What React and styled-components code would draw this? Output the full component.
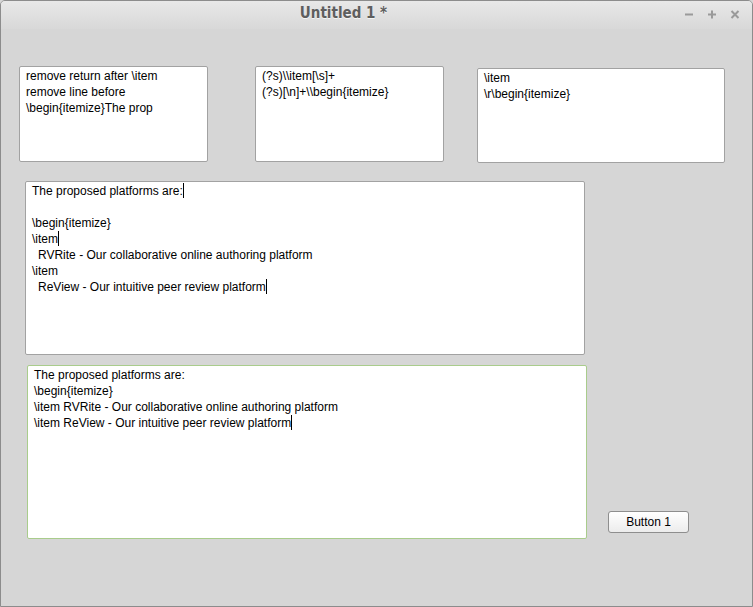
import React from "react";
import styled, { createGlobalStyle } from "styled-components";

const Global = createGlobalStyle`
  html, body {
    margin: 0;
    padding: 0;
    background: #d6d6d6;
  }
  body {
    font-family: "Liberation Sans", Arial, sans-serif;
  }
`;

const Window = styled.div`
  width: 753px;
  height: 607px;
  box-sizing: border-box;
  background: #d6d6d6;
  border: 1px solid #8c8c8c;
  border-radius: 5px 5px 0 0;
  display: flex;
  flex-direction: column;
  overflow: hidden;
`;

const TitleBar = styled.div`
  height: 28px;
  flex-shrink: 0;
  display: flex;
  align-items: center;
  justify-content: center;
  position: relative;
  background: linear-gradient(#e8e8e8, #d8d8d8);
`;

const Title = styled.span`
  font-family: "DejaVu Sans Condensed", "DejaVu Sans", sans-serif;
  font-stretch: condensed;
  font-weight: bold;
  font-size: 15px;
  color: #5e5e5e;
  text-shadow: 0 1px 0 #f4f4f4;
  margin-left: -66px;
  margin-top: -4px;
`;

const Controls = styled.div`
  position: absolute;
  right: 10px;
  top: 6px;
  display: flex;
  gap: 9px;
`;

const Ctl = styled.svg`
  width: 14px;
  height: 14px;
  stroke: #9a9a9a;
  stroke-width: 2;
  fill: none;
`;

const Body = styled.div`
  flex: 1;
  padding: 37px 0 0 17px;
  display: flex;
  flex-direction: column;
  align-items: flex-start;
`;

const TopRow = styled.div`
  display: flex;
  align-items: flex-start;
`;

const Box = styled.div`
  box-sizing: border-box;
  width: ${(p) => p.$w}px;
  height: ${(p) => p.$h}px;
  margin-left: ${(p) => p.$ml || 0}px;
  margin-top: ${(p) => p.$mt || 0}px;
  background: #fff;
  border: 1px solid ${(p) => (p.$focus ? "#a9cc8c" : "#a2a2a2")};
  border-radius: 2px;
  padding: 1px 6px;
  font-size: 12px;
  line-height: 16px;
  color: #000;
  white-space: pre;
  overflow: hidden;
`;

const Line = styled.div`
  height: 16px;
  margin-left: ${(p) => p.$indent || 0}px;
`;

const Caret = styled.span`
  display: inline-block;
  width: 0;
  height: 15px;
  border-left: 1px solid #000;
  vertical-align: -3px;
`;

const BottomRow = styled.div`
  display: flex;
  align-items: flex-end;
  margin-top: 10px;
  margin-left: 9px;
`;

const Button = styled.button`
  box-sizing: border-box;
  width: 81px;
  height: 22px;
  margin: 0 0 6px 21px;
  padding: 0;
  font-family: "Liberation Sans", Arial, sans-serif;
  font-size: 12px;
  color: #000;
  background: linear-gradient(#ffffff, #ececec);
  border: 1px solid #8e8e8e;
  border-radius: 3px;
`;

export default function App() {
  return (
    <>
      <Global />
      <Window>
        <TitleBar>
          <Title>Untitled 1 *</Title>
          <Controls>
            <Ctl viewBox="0 0 14 14">
              <path d="M3 7.5h8" />
            </Ctl>
            <Ctl viewBox="0 0 14 14">
              <path d="M3 7.5h8M7 3.5v8" />
            </Ctl>
            <Ctl viewBox="0 0 14 14">
              <path d="M3.5 4l7 7M10.5 4l-7 7" />
            </Ctl>
          </Controls>
        </TitleBar>
        <Body>
          <TopRow>
            <Box $w={189} $h={96} $ml={1}>
              <Line>remove return after \item</Line>
              <Line>remove line before</Line>
              <Line>\begin{"{"}itemize{"}"}The prop</Line>
            </Box>
            <Box $w={189} $h={96} $ml={47}>
              <Line>(?s)\\item[\s]+</Line>
              <Line>(?s)[\n]+\\begin{"{"}itemize{"}"}</Line>
            </Box>
            <Box $w={248} $h={95} $ml={33} $mt={2}>
              <Line>\item</Line>
              <Line>\r\begin{"{"}itemize{"}"}</Line>
            </Box>
          </TopRow>
          <Box $w={560} $h={174} $ml={7} $mt={18}>
            <Line>
              The proposed platforms are:<Caret />
            </Line>
            <Line />
            <Line>\begin{"{"}itemize{"}"}</Line>
            <Line>
              \item<Caret />
            </Line>
            <Line $indent={6}>RVRite - Our collaborative online authoring platform</Line>
            <Line>\item</Line>
            <Line $indent={6}>
              ReView - Our intuitive peer review platform<Caret />
            </Line>
          </Box>
          <BottomRow>
            <Box $w={560} $h={174} $focus>
              <Line>The proposed platforms are:</Line>
              <Line>\begin{"{"}itemize{"}"}</Line>
              <Line>\item RVRite - Our collaborative online authoring platform</Line>
              <Line>
                \item ReView - Our intuitive peer review platform<Caret />
              </Line>
            </Box>
            <Button>Button 1</Button>
          </BottomRow>
        </Body>
      </Window>
    </>
  );
}
